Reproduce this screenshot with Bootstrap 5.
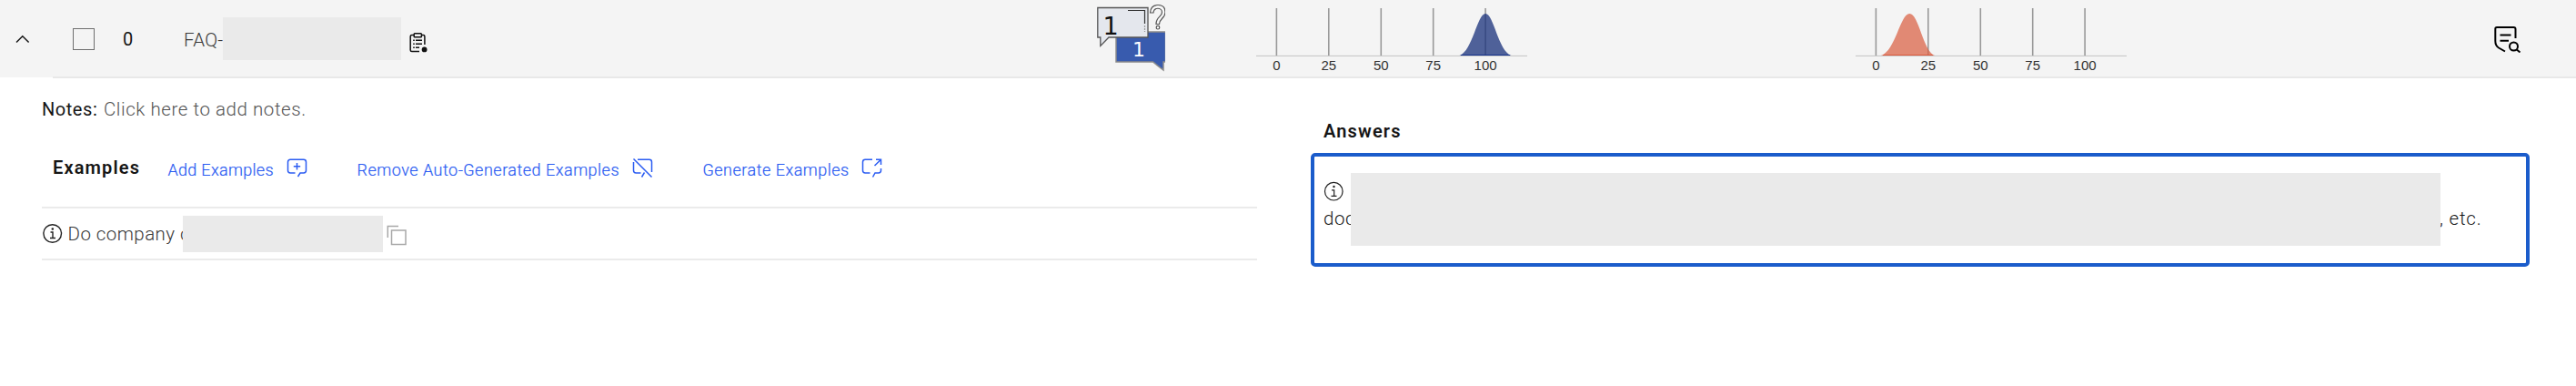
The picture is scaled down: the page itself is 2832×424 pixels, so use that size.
<!DOCTYPE html>
<html lang="en">
<head>
<meta charset="utf-8">
<title>FAQ intents</title>
<link href="https://cdn.jsdelivr.net/npm/bootstrap@5.3.0/dist/css/bootstrap.min.css" rel="stylesheet">
<style>
body{font-family:Roboto,"Liberation Sans",sans-serif;font-size:20.5px;font-weight:300;line-height:28px;color:#161616;background:#fff;overflow:hidden}
svg{display:block;flex:none}
.intent-row{height:85px;background:#f4f4f4}
.intent-row>div{flex:none;height:85px}
.cell-toggle{width:80px;padding-left:17px}
.cell-check{width:55px}
.cell-count{width:67px;font-weight:400;font-size:20px}
.cell-name{width:1004px}
.cell-bubbles{width:173px}
.cell-chart{width:658.7px}
.cell-second{width:704px}
.tick-box{width:24px;height:24px;border:1px solid #6f6f6f;margin-top:1px}
.redacted{background:#eaeaea;flex:none;position:relative}
.name-text{width:43px;padding-top:3px;color:#393939;letter-spacing:.3px}
.rule-line{height:2px;background:#e8e8e8;margin-left:58px;margin-top:-1px}
.left-pane{width:1336px;margin-left:46px}
.right-pane{width:1340px;margin-left:59px;padding-top:44px}
.notes-line{height:66px;padding-top:20px}
.notes-label{font-weight:400;font-size:20px;letter-spacing:.55px;width:68px}
.notes-text{letter-spacing:.56px;color:#525252}
.examples-bar{height:75px;padding-top:19px;font-size:18px;font-weight:400}
.section-title{font-size:20px;font-weight:600;letter-spacing:1.15px}
.examples-bar .section-title{width:126px;padding-left:12px;margin-top:-1px}
.tool-link{color:#2b5cf2;letter-spacing:.5px;text-decoration:none;white-space:nowrap;flex:none;font-weight:300;-webkit-text-stroke:.2px #2b5cf2}
.tool-link span{padding-top:1.500px}
.tool-link svg{margin-top:3px}
.example-item{height:59px;border-top:2px solid #ebebeb;border-bottom:2px solid #ebebeb;color:#393939}
.example-text{width:126.500px;margin-left:5.500px;letter-spacing:.45px;white-space:nowrap}
.answer-card{height:125px;border:4px solid #1b5ccb;border-radius:5px;margin-top:10px;padding:18px 0 0 10px}
.answer-start{width:30px;letter-spacing:.5px}
.answer-start svg{margin-top:9px;margin-bottom:3px}
.answer-end{letter-spacing:.8px;padding-top:36px;margin-left:-1px}
</style>
</head>
<body>
<header class="intent-row d-flex">
  <div class="cell-toggle d-flex align-items-center">
    <svg width="16" height="10" viewBox="0 0 16 10" fill="none" stroke="#161616" stroke-width="1.5"><path d="M1 8.5 7.8 1.7 14.6 8.5"/></svg>
  </div>
  <div class="cell-check d-flex align-items-center"><div class="tick-box"></div></div>
  <div class="cell-count d-flex align-items-center">0</div>
  <div class="cell-name d-flex align-items-center">
    <div class="name-text">FAQ-</div>
    <div class="redacted" style="width:196px;height:47px"></div>
    <svg class="ms-2 mt-2" width="24" height="26" viewBox="0 0 24 26" fill="none" stroke="#111" stroke-width="1.5"><path d="M6 4.5H3.8Q2.2 4.5 2.2 6.1v15Q2.2 22.6 3.8 22.6H12M14.5 4.5h1.8q1.6 0 1.6 1.6V15"/><rect x="6.2" y="2.8" width="8.2" height="4" rx=".8"/><path d="M5.2 10.2h1.6m1.2 0h7M5.2 14.2h1.6m1.2 0h7M5.2 18.2h1.6m1.2 0h4"/><circle cx="17.6" cy="20.4" r="2.9" fill="#111" stroke="none"/></svg>
  </div>
  <div class="cell-bubbles">
    <svg width="75" height="80" viewBox="0 0 75 80">
      <path d="M21 35H75.500V68H73V77L61.500 68H21Z" fill="#385bae" stroke="#8a8a8a" stroke-width="1.500"/>
      <path d="M.8 8.500H56V41H13L3.800 50.500V41H.8Z" fill="#e4e7ed" stroke="#555" stroke-width="1.300"/>
      <path d="M34 11.500H52.500V26" fill="none" stroke="#333" stroke-width="1.200"/><path d="M52.500 28V35" stroke="#999" stroke-width="1.200" stroke-dasharray="2 1"/>
      <path d="M58.500 14Q59 5.500 67 5.500T75 13.500C75 20 68.500 20.500 68.500 26.500H65C65 18 71.500 18.500 71.500 13.500C71.500 8 62.500 7.500 62 14Z" fill="#f8f8f8" stroke="#555" stroke-width="1.200"/>
      <circle cx="67" cy="30.200" r="1.800" fill="#fff" stroke="#555" stroke-width="1.200"/>
      <text x="15" y="38" text-anchor="middle" font-family="DejaVu Sans" font-size="27" font-weight="400" fill="#111">1</text>
      <text x="46" y="61.500" text-anchor="middle" font-family="DejaVu Sans" font-size="22" font-weight="400" fill="#fff">1</text>
    </svg>
  </div>
  <div class="cell-chart">
    <svg width="302" height="85" font-family="Liberation Sans" font-size="15" text-anchor="middle" fill="#333">
      <path d="M2 61.400H300" stroke="#c4c4c4"/>
      <path d="M24.400 9V61M81.800 9V61M139.300 9V61M196.700 9V61M254.100 9V61" stroke="#999" stroke-width="1.600"/>
      <path d="M225.500 61C240 56 245 15 254.100 15S268 56 282.500 61Z" fill="#18307b" fill-opacity=".75"/><path d="M227 60.500H281" stroke="#12318c" stroke-width="1.200"/>
      <text x="24.400" y="76.500">0</text><text x="81.800" y="76.500">25</text><text x="139.300" y="76.500">50</text><text x="196.700" y="76.500">75</text><text x="254.100" y="76.500">100</text>
    </svg>
  </div>
  <div class="cell-second">
    <svg width="302" height="85" font-family="Liberation Sans" font-size="15" text-anchor="middle" fill="#333">
      <path d="M2 61.400H300" stroke="#c4c4c4"/>
      <path d="M24.400 9V61M81.800 9V61M139.300 9V61M196.700 9V61M254.100 9V61" stroke="#999" stroke-width="1.600"/>
      <path d="M30 61C46 56 51 15 61.300 15S76 56 89 61Z" fill="#d95f43" fill-opacity=".72"/><path d="M32 60.500H87" stroke="#db573b" stroke-width="1.200"/>
      <text x="24.400" y="76.500">0</text><text x="81.800" y="76.500">25</text><text x="139.300" y="76.500">50</text><text x="196.700" y="76.500">75</text><text x="254.100" y="76.500">100</text>
    </svg>
  </div>
  <div class="d-flex align-items-center">
    <svg width="30" height="30" viewBox="0 0 30 30" fill="none" stroke="#000" stroke-width="2"><path d="M23.500 14V4Q23.500 2 21.500 2H3Q1.300 2 1.300 3.500V17Q1.300 22 5 24.500L12 28.500"/><path d="M6.500 10.500H18.500M6.500 16.700H16"/><circle cx="21.500" cy="23" r="4.500"/><path d="M24.500 26.200 28.500 29.500"/></svg>
  </div>
</header>
<div class="rule-line"></div>
<main class="d-flex">
  <section class="left-pane">
    <div class="notes-line d-flex"><span class="notes-label">Notes:</span><span class="notes-text">Click here to add notes.</span></div>
    <div class="examples-bar d-flex">
      <div class="section-title">Examples</div>
      <a class="tool-link d-flex" href="#" style="width:208.500px;padding-left:12.500px"><span style="width:130px;letter-spacing:.3px">Add Examples</span>
        <svg width="24" height="22" viewBox="0 0 24 22" fill="none" stroke="currentColor" stroke-width="1.500"><path d="M9.500 16H4.200Q1.500 16 1.500 13.300V4Q1.500 1.300 4.200 1.300H18.800Q21.500 1.300 21.500 4V13.300Q21.500 16 18.800 16H15L12.500 20M11.500 5V12.400M7.800 8.700H15.200"/></svg></a>
      <a class="tool-link d-flex" href="#" style="width:380px;padding-left:12px"><span style="width:302px">Remove Auto-Generated Examples</span>
        <svg width="24" height="22" viewBox="0 0 24 22" fill="none" stroke="currentColor" stroke-width="1.500"><path d="M1.500.5 21.500 20.500M6 1.300H18.800Q21.500 1.300 21.500 4V15M1.500 4V13.300Q1.500 16 4.200 16H9.500M13.500 15.500 10.500 20.500"/></svg></a>
      <a class="tool-link d-flex" href="#" style="padding-left:12px"><span style="width:174px">Generate Examples</span>
        <svg width="24" height="22" viewBox="0 0 24 22" fill="none" stroke="currentColor" stroke-width="1.500"><path d="M12 1.300H4.200Q1.500 1.300 1.500 4V13.300Q1.500 16 4.200 16H9.500M21.500 11V13.300Q21.500 16 18.800 16H15L12.500 20.500M14.500 8 21.500 1.300M16 1.300H21.500V7"/></svg></a>
    </div>
    <div class="example-item d-flex align-items-center">
      <svg width="23" height="23" viewBox="0 0 23 23" fill="none" stroke="#222" stroke-width="1.400"><circle cx="11.700" cy="11.500" r="9.800"/><path d="M9.500 10H12V16.300M9 16.500H15"/><circle cx="11.800" cy="6.500" r=".6" fill="#222"/></svg>
      <div class="example-text">Do company c</div>
      <div class="redacted" style="width:220px;height:40px"></div>
      <svg class="ms-1 mt-1" width="23" height="23" viewBox="0 0 23 23" fill="none" stroke="#a8a8a8" stroke-width="1.500"><rect x="5.500" y="6" width="15.500" height="15.500"/><path d="M1.300 14V1.500H13"/></svg>
    </div>
  </section>
  <section class="right-pane">
    <div class="section-title" style="padding-left:14px">Answers</div>
    <div class="answer-card d-flex">
      <div class="answer-start">
        <svg width="24" height="24" viewBox="0 0 24 24" fill="none" stroke="#222" stroke-width="1.200"><circle cx="11.300" cy="11.200" r="9.800"/><path d="M9 9.800H11.700V16M8.500 16.300H14.500"/><circle cx="11.500" cy="6" r=".6" fill="#222"/></svg>
        doc
      </div>
      <div class="redacted" style="width:1198px;height:80px"></div>
      <div class="answer-end">, etc.</div>
    </div>
  </section>
</main>
<script src="https://cdn.jsdelivr.net/npm/bootstrap@5.3.0/dist/js/bootstrap.bundle.min.js"></script>
</body>
</html>
